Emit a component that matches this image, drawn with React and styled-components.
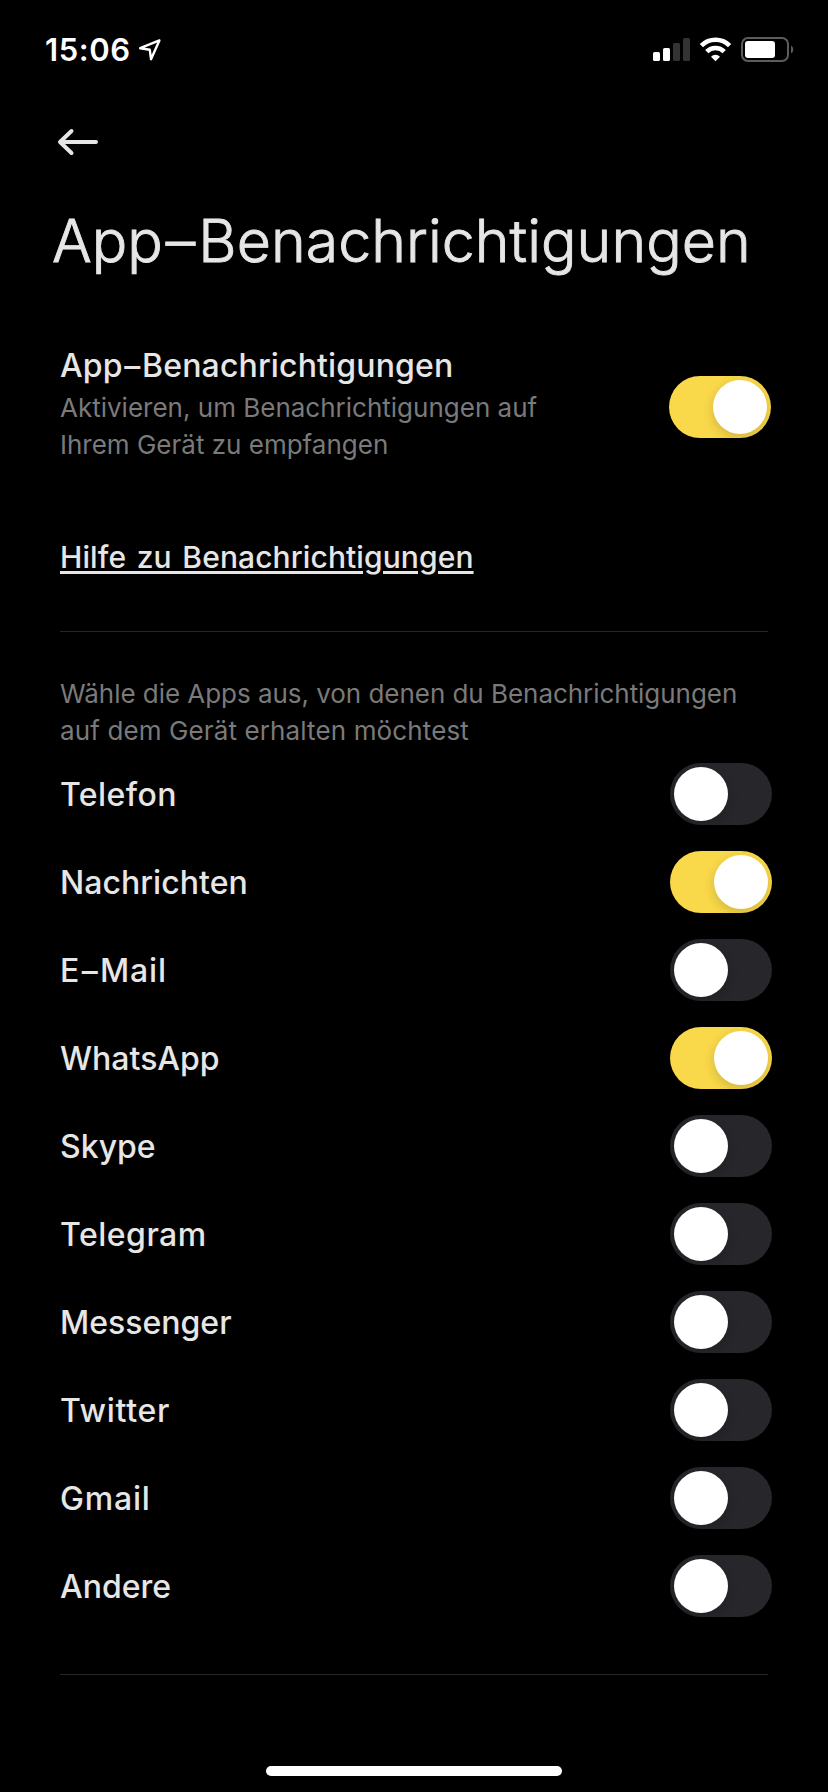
import React, { useState } from 'react';
import styled, { createGlobalStyle } from 'styled-components';

const GlobalStyle = createGlobalStyle`
  * {
    box-sizing: border-box;
  }

  body {
    margin: 0;
    background: #000000;
    font-family: 'Inter', 'Liberation Sans', sans-serif;
    color: #e6e6e6;
  }
`;

const Screen = styled.div`
  width: 828px;
  height: 1792px;
  display: flex;
  flex-direction: column;
  background: #000000;
  overflow: hidden;
`;

const StatusBar = styled.div`
  height: 99px;
  padding: 0 34px 0 45px;
  display: flex;
  align-items: center;
  justify-content: space-between;
  color: #ffffff;
`;

const StatusLeft = styled.div`
  display: flex;
  align-items: center;
  gap: 7px;
`;

const Time = styled.span`
  font-size: 31px;
  font-weight: 600;
  line-height: 40px;
  letter-spacing: 0.6px;
`;

const StatusIcons = styled.svg`
  display: block;
  width: 142px;
  height: 26px;
`;

const BackButton = styled.button`
  width: 60px;
  height: 86px;
  margin-left: 48px;
  padding: 0;
  border: none;
  background: none;
  color: #e6e6e6;
  display: flex;
  align-items: center;
  justify-content: center;
`;

const PageTitle = styled.h1`
  margin: 20px 0 0 52px;
  font-size: 59px;
  font-weight: 300;
  line-height: 72px;
  letter-spacing: 0.05px;
  white-space: nowrap;
  -webkit-text-stroke: 0.9px #e6e6e6;
`;

const Dash = styled.span`
  padding: 0 0.05em;
`;

const Content = styled.main`
  padding: 68px 56px 0 60px;
`;

const MainSetting = styled.section`
  display: flex;
  justify-content: space-between;
  padding-right: 1px;
`;

const SettingTitle = styled.h2`
  margin: 0 0 3px;
  font-size: 32px;
  font-weight: 500;
  line-height: 41px;
  letter-spacing: 0.15px;
`;

const Description = styled.p`
  margin: 0;
  font-size: 26px;
  font-weight: 400;
  line-height: 37px;
  white-space: nowrap;
  color: #7a7a7a;
`;

const Line = styled.span`
  display: block;
  letter-spacing: ${props => props.$tracking || 0}px;
`;

const HelpLink = styled.a`
  display: block;
  width: fit-content;
  margin-top: 74px;
  font-size: 30px;
  font-weight: 500;
  line-height: 40px;
  letter-spacing: 0.1px;
  word-spacing: 2.5px;
  text-decoration: underline;
  text-decoration-thickness: 3px;
  text-underline-offset: 3px;
`;

const Divider = styled.hr`
  width: 708px;
  height: 1px;
  margin: ${props => props.$top}px 0 0;
  border: none;
  background: #262626;
`;

const Intro = styled(Description)`
  margin-top: 43px;
`;

const AppList = styled.ul`
  margin: 1px 0 0;
  padding: 0;
  list-style: none;
`;

const AppRow = styled.li`
  height: 88px;
  display: flex;
  align-items: center;
  justify-content: space-between;
`;

const AppName = styled.span`
  font-size: 32px;
  font-weight: 500;
  letter-spacing: ${props => props.$tracking || 0}px;
`;

const Track = styled.button`
  width: 102px;
  height: 62px;
  margin-top: ${props => props.$offset || 0}px;
  padding: 4px;
  border: none;
  border-radius: 31px;
  display: flex;
  flex-shrink: 0;
  justify-content: ${props => props.$on ? 'flex-end' : 'flex-start'};
  background: ${props => props.$on ? '#f9d84a' : '#27262b'};
`;

const Knob = styled.span`
  width: 54px;
  height: 54px;
  border-radius: 50%;
  background: #ffffff;
  box-shadow: 0 4px 12px rgba(0, 0, 0, 0.16);
`;

const HomeIndicator = styled.div`
  width: 296px;
  height: 10px;
  margin: auto auto 16px;
  border-radius: 5px;
  background: #ffffff;
`;

const initialApps = [
  { name: 'Telefon', on: false, tracking: 0.45 },
  { name: 'Nachrichten', on: true, tracking: 0.05 },
  { name: 'E–Mail', on: false, tracking: 0.8 },
  { name: 'WhatsApp', on: true },
  { name: 'Skype', on: false },
  { name: 'Telegram', on: false, tracking: 0.5 },
  { name: 'Messenger', on: false },
  { name: 'Twitter', on: false, tracking: 0.7 },
  { name: 'Gmail', on: false, tracking: 0.8 },
  { name: 'Andere', on: false },
];

// gives the dash in a label some air on both sides
function Label({ text }) {
  const [first, rest] = text.split('–');
  if (!rest) return text;
  return <>{first}<Dash>–</Dash>{rest}</>;
}

function Toggle({ on, onClick, offset }) {
  return (
    <Track type="button" role="switch" aria-checked={on} $on={on} $offset={offset} onClick={onClick}>
      <Knob />
    </Track>
  );
}

function LocationIcon() {
  return (
    <svg width="24" height="24" viewBox="0 0 24 24" fill="none" stroke="#ffffff" strokeWidth="2.4" strokeLinejoin="round">
      <path d="M21.4 2.4 L2.2 10.2 L11.8 11.8 L13 21.2 Z" />
    </svg>
  );
}

function SystemIcons() {
  return (
    <StatusIcons viewBox="0 0 142 26">
      <rect x="1" y="15" width="7" height="9" rx="1.6" fill="#ffffff" />
      <rect x="11" y="11" width="7" height="13" rx="1.6" fill="#ffffff" />
      <rect x="21" y="6" width="7" height="18" rx="1.6" fill="#333333" />
      <rect x="31" y="1" width="7" height="23" rx="1.6" fill="#333333" />
      <g fill="none" stroke="#ffffff" strokeWidth="4.6">
        <path d="M49.4 8.6 A20 20 0 0 1 77.6 8.6" />
        <path d="M54.8 14.7 A12.2 12.2 0 0 1 72.2 14.7" />
      </g>
      <path d="M63.5 24.2 L59 19.7 A6.4 6.4 0 0 1 68 19.7 Z" fill="#ffffff" />
      <rect x="90" y="1" width="46" height="23" rx="6" fill="none" stroke="#5c5c5c" strokeWidth="2" />
      <rect x="93" y="4" width="30" height="17" rx="3" fill="#ffffff" />
      <path d="M139 8.5 A4.6 4.6 0 0 1 139 16.5 Z" fill="#5c5c5c" />
    </StatusIcons>
  );
}

function App() {
  const [enabled, setEnabled] = useState(true);
  const [apps, setApps] = useState(initialApps);

  const toggleApp = name => {
    setApps(apps.map(app => (app.name === name ? { ...app, on: !app.on } : app)));
  };

  return (
    <Screen>
      <GlobalStyle />
      <StatusBar>
        <StatusLeft>
          <Time>15:06</Time>
          <LocationIcon />
        </StatusLeft>
        <SystemIcons />
      </StatusBar>
      <BackButton aria-label="Zurück">
        <svg width="42" height="30" viewBox="0 0 42 30" fill="none" stroke="currentColor" strokeWidth="4" strokeLinecap="round" strokeLinejoin="round">
          <path d="M39 15 H3 M14.5 4 L3 15 L14.5 26" />
        </svg>
      </BackButton>
      <PageTitle><Label text="App–Benachrichtigungen" /></PageTitle>
      <Content>
        <MainSetting>
          <div>
            <SettingTitle><Label text="App–Benachrichtigungen" /></SettingTitle>
            <Description>
              <Line>Aktivieren, um Benachrichtigungen auf</Line>
              <Line>Ihrem Gerät zu empfangen</Line>
            </Description>
          </div>
          <Toggle on={enabled} offset={31} onClick={() => setEnabled(!enabled)} />
        </MainSetting>
        <HelpLink>Hilfe zu Benachrichtigungen</HelpLink>
        <Divider $top={54} />
        <Intro>
          <Line $tracking={-0.04}>Wähle die Apps aus, von denen du Benachrichtigungen</Line>
          <Line $tracking={0.12}>auf dem Gerät erhalten möchtest</Line>
        </Intro>
        <AppList>
          {apps.map(app => (
            <AppRow key={app.name}>
              <AppName $tracking={app.tracking}><Label text={app.name} /></AppName>
              <Toggle on={app.on} onClick={() => toggleApp(app.name)} />
            </AppRow>
          ))}
        </AppList>
        <Divider $top={44} />
      </Content>
      <HomeIndicator />
    </Screen>
  );
}

export default App;
